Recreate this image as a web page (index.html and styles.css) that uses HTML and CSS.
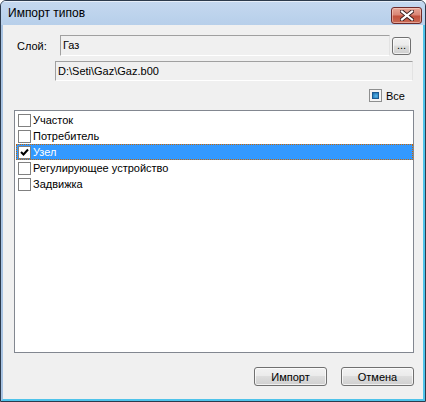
FILE: index.html
```html
<!DOCTYPE html>
<html lang="ru">
<head>
<meta charset="utf-8">
<title>Импорт типов</title>
<link rel="stylesheet" href="styles.css">
</head>
<body>
<div class="window">
  <div class="titlebar">
    <span class="title">Импорт типов</span>
    <div class="close">
      <svg width="14" height="11" viewBox="0 0 14 11">
        <path d="M2 1.5 L12 9.5 M12 1.5 L2 9.5" stroke="#3a1f1f" stroke-width="4" stroke-linecap="square" fill="none"/>
        <path d="M2 1.5 L12 9.5 M12 1.5 L2 9.5" stroke="#ffffff" stroke-width="2.2" stroke-linecap="square" fill="none"/>
      </svg>
    </div>
  </div>
  <div class="client">
    <div class="layer-row">
      <span class="label">Слой:</span>
      <div class="field field-name">Газ</div>
      <div class="btn browse">...</div>
    </div>
    <div class="field field-path">D:\Seti\Gaz\Gaz.b00</div>
    <div class="all-row">
      <span class="cb cb-mixed"><span class="mixed-fill"></span></span>
      <span class="all-label">Все</span>
    </div>
    <div class="list">
      <div class="item"><span class="cb"></span><span class="item-text">Участок</span></div>
      <div class="item"><span class="cb"></span><span class="item-text">Потребитель</span></div>
      <div class="item selected"><span class="cb"><svg width="11" height="11" viewBox="0 0 11 11"><path d="M2 5 L4.5 7.5 L9 2.5" stroke="#000" stroke-width="2" fill="none"/></svg></span><span class="item-text">Узел</span></div>
      <div class="item"><span class="cb"></span><span class="item-text">Регулирующее устройство</span></div>
      <div class="item"><span class="cb"></span><span class="item-text">Задвижка</span></div>
    </div>
    <div class="buttons">
      <div class="btn action">Импорт</div>
      <div class="btn action">Отмена</div>
    </div>
  </div>
</div>
</body>
</html>
```
FILE: styles.css
```css
* { box-sizing: border-box; }
html, body {
  margin: 0;
  padding: 0;
  background: #ffffff;
}
body {
  font-family: "Liberation Sans", Arial, sans-serif;
  font-size: 11px;
  color: #000;
}
.window {
  width: 426px;
  height: 402px;
  border: 1px solid #2c3a4c;
  border-radius: 6px 6px 0 0;
  background: #b9d1ea;
  display: flex;
  flex-direction: column;
  overflow: hidden;
}
.titlebar {
  height: 24px;
  flex: none;
  display: flex;
  align-items: center;
  justify-content: space-between;
  padding: 0 3px 0 7px;
  background: linear-gradient(to bottom, #c4d8ef 0%, #b7cfea 100%);
  border-top: 1px solid #e6eef8;
}
.title {
  font-size: 12px;
  color: #000;
  margin-top: -1px;
}
.close {
  width: 31px;
  height: 17px;
  margin-top: 4px;
  border: 1px solid #6e2a2a;
  border-radius: 3px;
  background: linear-gradient(to bottom, #e7a797 0%, #d98676 45%, #c2513d 55%, #c96b55 100%);
  box-shadow: inset 0 0 0 1px rgba(255,220,210,0.5);
  display: flex;
  align-items: center;
  justify-content: center;
}
.client {
  flex: 1;
  background: #f0f0f0;
  border-left: 2px solid #a8c3e2;
  border-right: 2px solid #4ec3ea;
  border-bottom: 2px solid #4ec3ea;
  display: flex;
  flex-direction: column;
}
.layer-row {
  display: flex;
  align-items: center;
  margin-top: 10px;
  height: 21px;
}
.label {
  width: 43px;
  padding-left: 14px;
}
.field {
  background: #f0f0f0;
  border-top: 1px solid #a0a0a0;
  border-left: 1px solid #a0a0a0;
  border-right: 1px solid #e3e3e3;
  border-bottom: 1px solid #ffffff;
  padding-left: 2px;
  display: flex;
  align-items: center;
  padding-bottom: 1px;
}
.field-name {
  margin-left: 14px;
  width: 330px;
  height: 21px;
}
.browse {
  margin-left: 2px;
  width: 19px;
  height: 18px;
  font-size: 11px;
  align-items: flex-end;
  padding-bottom: 1px;
  line-height: 9px;
}
.field-path {
  margin-left: 52px;
  margin-top: 5px;
  width: 358px;
  height: 20px;
}
.all-row {
  display: flex;
  align-items: center;
  margin-top: 8px;
  margin-left: 366px;
  height: 13px;
}
.all-label {
  margin-left: 4px;
}
.cb {
  width: 13px;
  height: 13px;
  border: 1px solid #8e8f8f;
  background: #fff;
  flex: none;
  display: flex;
  align-items: center;
  justify-content: center;
}
.cb-mixed {
  padding: 2px;
  background: #f4f4f4;
}
.mixed-fill {
  display: block;
  width: 100%;
  height: 100%;
  background: radial-gradient(circle at 60% 60%, #5ab8e6 0%, #2a7fc0 70%, #1d5f9c 100%);
  border: 1px solid #1d5a90;
}
.list {
  margin: 8px 0 0 11px;
  width: 400px;
  height: 243px;
  border: 1px solid #828790;
  background: #fff;
  padding: 1px 0 0 1px;
  flex: none;
}
.item {
  height: 16px;
  display: flex;
  align-items: center;
  padding-left: 1px;
  border: 1px solid transparent;
}
.item .cb {
  border-color: #808080;
}
.item-text {
  margin-left: 2px;
  white-space: nowrap;
}
.item.selected {
  background: #3399ff;
  color: #fff;
  border: 1px dotted #cc6600;
}
.buttons {
  display: flex;
  justify-content: flex-end;
  gap: 14px;
  margin-top: 14px;
  padding-right: 9px;
}
.btn {
  border: 1px solid #707070;
  border-radius: 3px;
  background: linear-gradient(to bottom, #f2f2f2 0%, #ebebeb 45%, #dddddd 50%, #cfcfcf 100%);
  box-shadow: inset 0 0 0 1px rgba(255,255,255,0.7);
  display: flex;
  justify-content: center;
  align-items: center;
  flex: none;
}
.action {
  width: 73px;
  height: 19px;
}
```
